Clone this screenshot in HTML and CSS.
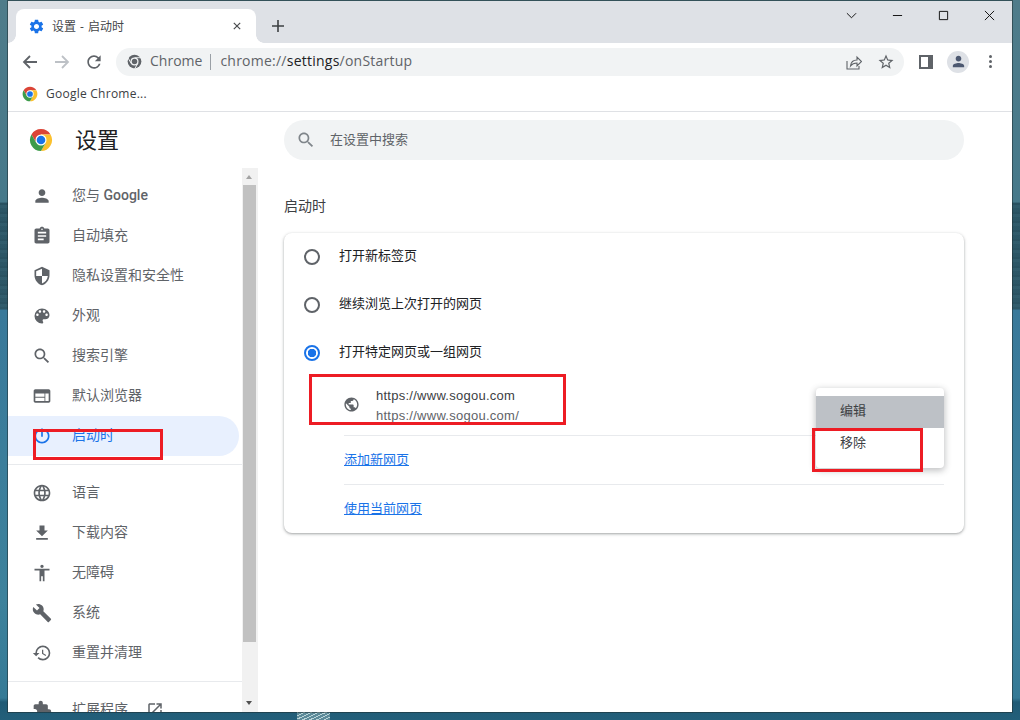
FILE: index.html
```html
<!DOCTYPE html>
<html lang="zh-CN">
<head>
<meta charset="utf-8">
<title>设置 - 启动时</title>
<link rel="stylesheet" href="styles.css">
</head>
<body>
<div class="wall-mark"></div>
<div class="window">
  <header class="tabstrip">
    <div class="tab">
      <svg class="tab-icon" viewBox="0 0 24 24"><path d="M19.14 12.94c.04-.3.06-.61.06-.94 0-.32-.02-.64-.07-.94l2.03-1.58c.18-.14.23-.41.12-.61l-1.92-3.32c-.12-.22-.37-.29-.59-.22l-2.39.96c-.5-.38-1.03-.7-1.62-.94l-.36-2.54c-.04-.24-.24-.41-.48-.41h-3.84c-.24 0-.43.17-.47.41l-.36 2.54c-.59.24-1.13.57-1.62.94l-2.39-.96c-.22-.08-.47 0-.59.22L2.74 8.87c-.12.21-.08.47.12.61l2.03 1.58c-.05.3-.09.63-.09.94s.02.64.07.94l-2.03 1.58c-.18.14-.23.41-.12.61l1.92 3.32c.12.22.37.29.59.22l2.39-.96c.5.38 1.03.7 1.62.94l.36 2.54c.05.24.24.41.48.41h3.84c.24 0 .44-.17.47-.41l.36-2.54c.59-.24 1.13-.56 1.62-.94l2.39.96c.22.08.47 0 .59-.22l1.92-3.32c.12-.22.07-.47-.12-.61l-2.01-1.58zM12 15.6c-1.98 0-3.6-1.62-3.6-3.6s1.62-3.6 3.6-3.6 3.6 1.62 3.6 3.6-1.62 3.6-3.6 3.6z"/></svg>
      <span class="tab-title">设置 - 启动时</span>
      <svg class="tab-close" viewBox="0 0 10 10"><path d="M1 1l8 8M9 1l-8 8"/></svg>
    </div>
    <svg class="new-tab" viewBox="0 0 12 12"><path d="M6 0v12M0 6h12"/></svg>
    <div class="win-controls">
      <div class="win-btn"><svg class="win-icon" viewBox="0 0 12 12"><path d="M1 3.5l5 5 5-5"/></svg></div>
      <div class="win-btn"><svg class="win-icon" viewBox="0 0 12 12"><path d="M1 6h10"/></svg></div>
      <div class="win-btn"><svg class="win-icon" viewBox="0 0 12 12"><path d="M1.5 1.5h9v9h-9z"/></svg></div>
      <div class="win-btn"><svg class="win-icon" viewBox="0 0 12 12"><path d="M1 1l10 10M11 1L1 11"/></svg></div>
    </div>
  </header>

  <div class="toolbar">
    <div class="tool-btn"><svg class="stroke-icon dark" viewBox="0 0 16 16"><path d="M15 8H2M8 2L2 8l6 6"/></svg></div>
    <div class="tool-btn"><svg class="stroke-icon faded" viewBox="0 0 16 16"><path d="M1 8h13M8 2l6 6-6 6"/></svg></div>
    <div class="tool-btn"><svg class="fill-icon dark reload" viewBox="0 0 24 24"><path d="M17.65 6.35A7.958 7.958 0 0 0 12 4c-4.42 0-7.99 3.58-7.99 8s3.57 8 7.99 8c3.73 0 6.84-2.55 7.73-6h-2.08A5.99 5.99 0 0 1 12 18c-3.31 0-6-2.69-6-6s2.69-6 6-6c1.66 0 3.14.69 4.22 1.78L13 11h7V4l-2.35 2.35z"/></svg></div>
    <div class="omnibox">
      <svg class="omni-chrome" viewBox="0 0 24 24">
        <circle cx="12" cy="12" r="11" class="omni-dark"/>
        <circle cx="12" cy="12" r="6.4" class="omni-light"/>
        <circle cx="12" cy="12" r="4.4" class="omni-dark"/>
        <path class="omni-notch" d="M12 5.9H23"/>
        <path class="omni-notch" d="M12 5.9H23" transform="rotate(120 12 12)"/>
        <path class="omni-notch" d="M12 5.9H23" transform="rotate(240 12 12)"/>
      </svg>
      <span class="omni-host">Chrome</span>
      <span class="omni-sep"></span>
      <span class="omni-url">chrome://<b class="omni-strong">settings</b>/onStartup</span>
      <svg class="share-icon" viewBox="0 0 16 16"><path d="M1 7v8h12v-3M4.5 12c.4-3.6 3-6 6.5-6V3l4.5 4.5-4.5 4.500V9c-2.7 0-5 1-6.500 3z"/></svg>
      <svg class="star-icon" viewBox="0 0 24 24"><path d="M22 9.24l-7.19-.62L12 2 9.19 8.63 2 9.24l5.46 4.73L5.82 21 12 17.27 18.18 21l-1.63-7.03L22 9.24zM12 15.4l-3.76 2.27 1-4.28-3.32-2.88 4.38-.38L12 6.1l1.71 4.04 4.38.38-3.32 2.88 1 4.28L12 15.4z"/></svg>
    </div>
    <div class="tool-btn"><span class="side-panel"></span></div>
    <div class="tool-btn">
      <span class="avatar"><svg class="avatar-icon" viewBox="0 0 24 24"><path d="M12 12c2.21 0 4-1.79 4-4s-1.79-4-4-4-4 1.79-4 4 1.79 4 4 4zm0 2c-2.67 0-8 1.34-8 4v2h16v-2c0-2.66-5.33-4-8-4z"/></svg></span>
    </div>
    <div class="tool-btn"><span class="dots"><i></i><i></i><i></i></span></div>
  </div>

  <div class="bookmarks">
    <svg class="logo-small" viewBox="0 0 24 24">
      <path class="c-red" d="M21.53 6.5A11 11 0 0 0 2.47 6.5L7.24 14.75 12 12 12 6.5Z"/>
      <path class="c-yellow" transform="rotate(120 12 12)" d="M21.53 6.5A11 11 0 0 0 2.47 6.5L7.24 14.75 12 12 12 6.5Z"/>
      <path class="c-green" transform="rotate(240 12 12)" d="M21.53 6.5A11 11 0 0 0 2.47 6.5L7.24 14.75 12 12 12 6.5Z"/>
      <circle cx="12" cy="12" r="5.5" class="c-white"/>
      <circle cx="12" cy="12" r="4.3" class="c-blue"/>
    </svg>
    <span class="bookmark-text">Google Chrome...</span>
  </div>

  <div class="page">
    <aside class="sidebar">
      <div class="side-head">
        <svg class="logo-big" viewBox="0 0 24 24">
          <path class="c-red" d="M21.53 6.5A11 11 0 0 0 2.47 6.5L7.24 14.75 12 12 12 6.5Z"/>
          <path class="c-yellow" transform="rotate(120 12 12)" d="M21.53 6.5A11 11 0 0 0 2.47 6.5L7.24 14.75 12 12 12 6.5Z"/>
          <path class="c-green" transform="rotate(240 12 12)" d="M21.53 6.5A11 11 0 0 0 2.47 6.5L7.24 14.75 12 12 12 6.5Z"/>
          <circle cx="12" cy="12" r="5.5" class="c-white"/>
          <circle cx="12" cy="12" r="4.3" class="c-blue"/>
        </svg>
        <h1 class="side-title">设置</h1>
      </div>
      <div class="side-body">
        <nav class="nav">
          <div class="nav-item"><svg class="nav-icon" viewBox="0 0 24 24"><path d="M12 12c2.21 0 4-1.79 4-4s-1.79-4-4-4-4 1.79-4 4 1.79 4 4 4zm0 2c-2.67 0-8 1.34-8 4v2h16v-2c0-2.66-5.33-4-8-4z"/></svg><span>您与 <b class="brand">Google</b></span></div>
          <div class="nav-item"><svg class="nav-icon" viewBox="0 0 24 24"><path d="M19 3h-4.18C14.4 1.84 13.3 1 12 1c-1.3 0-2.4.84-2.82 2H5c-1.1 0-2 .9-2 2v14c0 1.1.9 2 2 2h14c1.1 0 2-.9 2-2V5c0-1.1-.9-2-2-2zm-7 0c.55 0 1 .45 1 1s-.45 1-1 1-1-.45-1-1 .45-1 1-1zm2 14H7v-2h7v2zm3-4H7v-2h10v2zm0-4H7V7h10v2z"/></svg>自动填充</div>
          <div class="nav-item"><svg class="nav-icon" viewBox="0 0 24 24"><path d="M12 1L3 5v6c0 5.55 3.84 10.74 9 12 5.16-1.26 9-6.45 9-12V5l-9-4zm0 10.99h7c-.53 4.12-3.28 7.79-7 8.94V12H5V6.3l7-3.11v8.8z"/></svg>隐私设置和安全性</div>
          <div class="nav-item"><svg class="nav-icon" viewBox="0 0 24 24"><path d="M12 3a9 9 0 0 0 0 18c.83 0 1.5-.67 1.5-1.5 0-.39-.15-.74-.39-1.01-.23-.26-.38-.61-.38-.99 0-.83.67-1.5 1.5-1.5H16c2.76 0 5-2.24 5-5 0-4.42-4.03-8-9-8zm-5.5 9c-.83 0-1.5-.67-1.5-1.5S5.67 9 6.5 9 8 9.67 8 10.5 7.33 12 6.5 12zm3-4C8.67 8 8 7.33 8 6.5S8.67 5 9.5 5s1.5.67 1.5 1.5S10.33 8 9.5 8zm5 0c-.83 0-1.5-.67-1.5-1.5S13.67 5 14.5 5s1.5.67 1.5 1.5S15.33 8 14.5 8zm3 4c-.83 0-1.5-.67-1.5-1.5S16.67 9 17.5 9s1.5.67 1.5 1.5-.67 1.5-1.5 1.5z"/></svg>外观</div>
          <div class="nav-item"><svg class="nav-icon" viewBox="0 0 24 24"><path d="M15.5 14h-.79l-.28-.27C15.41 12.59 16 11.11 16 9.5 16 5.91 13.09 3 9.5 3S3 5.91 3 9.5 5.91 16 9.5 16c1.61 0 3.09-.59 4.23-1.57l.27.28v.79l5 4.99L20.49 19l-4.99-5zm-6 0C7.01 14 5 11.99 5 9.5S7.01 5 9.5 5 14 7.01 14 9.5 11.99 14 9.5 14z"/></svg>搜索引擎</div>
          <div class="nav-item"><svg class="nav-icon" viewBox="0 0 24 24"><path d="M20 4H4c-1.1 0-1.99.9-1.99 2L2 18c0 1.1.9 2 2 2h16c1.1 0 2-.9 2-2V6c0-1.1-.9-2-2-2zm-5 14H4v-4h11v4zm0-5H4V9h11v4zm5 5h-4V9h4v9z"/></svg>默认浏览器</div>
          <div class="nav-item active"><svg class="nav-icon" viewBox="0 0 24 24"><path d="M13 3h-2v10h2V3zm4.83 2.17l-1.42 1.42C17.99 7.86 19 9.81 19 12c0 3.87-3.13 7-7 7s-7-3.13-7-7c0-2.19 1.01-4.14 2.58-5.42L6.17 5.17C4.23 6.82 3 9.26 3 12c0 4.97 4.03 9 9 9s9-4.03 9-9c0-2.74-1.23-5.18-3.17-6.83z"/></svg>启动时</div>
          <div class="nav-divider"></div>
          <div class="nav-item"><svg class="nav-icon" viewBox="0 0 24 24"><path d="M11.99 2C6.47 2 2 6.48 2 12s4.47 10 9.99 10C17.52 22 22 17.52 22 12S17.52 2 11.99 2zm6.93 6h-2.95c-.32-1.25-.78-2.45-1.38-3.56 1.84.63 3.37 1.91 4.33 3.56zM12 4.04c.83 1.2 1.48 2.53 1.91 3.96h-3.82c.43-1.43 1.08-2.76 1.91-3.96zM4.26 14C4.1 13.36 4 12.69 4 12s.1-1.36.26-2h3.38c-.08.66-.14 1.32-.14 2 0 .68.06 1.34.14 2H4.26zm.82 2h2.95c.32 1.25.78 2.45 1.38 3.56-1.84-.63-3.37-1.9-4.33-3.56zm2.95-8H5.08c.96-1.66 2.49-2.93 4.33-3.56C8.81 5.55 8.35 6.75 8.03 8zM12 19.96c-.83-1.2-1.48-2.53-1.91-3.96h3.82c-.43 1.43-1.08 2.76-1.91 3.96zM14.34 14H9.66c-.09-.66-.16-1.32-.16-2 0-.68.07-1.35.16-2h4.68c.09.65.16 1.32.16 2 0 .68-.07 1.34-.16 2zm.25 5.56c.6-1.11 1.06-2.31 1.38-3.56h2.95c-.96 1.65-2.49 2.93-4.33 3.56zM16.36 14c.08-.66.14-1.32.14-2 0-.68-.06-1.34-.14-2h3.38c.16.64.26 1.31.26 2s-.1 1.36-.26 2h-3.38z"/></svg>语言</div>
          <div class="nav-item"><svg class="nav-icon" viewBox="0 0 24 24"><path d="M19 9h-4V3H9v6H5l7 7 7-7zM5 18v2h14v-2H5z"/></svg>下载内容</div>
          <div class="nav-item"><svg class="nav-icon" viewBox="0 0 24 24"><path d="M12 2c1.1 0 2 .9 2 2s-.9 2-2 2-2-.9-2-2 .9-2 2-2zm9 7h-6v13h-2v-6h-2v6H9V9H3V7h18v2z"/></svg>无障碍</div>
          <div class="nav-item"><svg class="nav-icon" viewBox="0 0 24 24"><path d="M22.7 19l-9.1-9.1c.9-2.3.4-5-1.5-6.9-2-2-5-2.4-7.4-1.3L9 6 6 9 1.6 4.7C.4 7.1.9 10.1 2.9 12.1c1.9 1.9 4.6 2.4 6.9 1.5l9.1 9.1c.4.4 1 .4 1.4 0l2.3-2.3c.5-.4.5-1.1.1-1.4z"/></svg>系统</div>
          <div class="nav-item"><svg class="nav-icon" viewBox="0 0 24 24"><path d="M13 3a9 9 0 0 0-9 9H1l3.89 3.89.07.14L9 12H6c0-3.87 3.13-7 7-7s7 3.13 7 7-3.13 7-7 7c-1.93 0-3.68-.79-4.94-2.06l-1.42 1.42A8.954 8.954 0 0 0 13 21a9 9 0 0 0 0-18zm-1 5v5l4.28 2.54.72-1.21-3.5-2.08V8H12z"/></svg>重置并清理</div>
          <div class="nav-divider"></div>
          <div class="nav-item"><svg class="nav-icon" viewBox="0 0 24 24"><path d="M20.5 11H19V7c0-1.1-.9-2-2-2h-4V3.5C13 2.12 11.88 1 10.5 1S8 2.12 8 3.5V5H4c-1.1 0-1.99.9-1.99 2v3.8H3.5c1.49 0 2.7 1.21 2.7 2.7s-1.21 2.7-2.7 2.7H2V20c0 1.1.9 2 2 2h3.8v-1.5c0-1.49 1.21-2.7 2.7-2.7 1.49 0 2.7 1.21 2.7 2.7V22H17c1.1 0 2-.9 2-2v-4h1.5c1.38 0 2.5-1.12 2.5-2.5S21.88 11 20.5 11z"/></svg>扩展程序<svg class="ext-icon" viewBox="0 0 24 24"><path d="M19 19H5V5h7V3H5c-1.11 0-2 .9-2 2v14c0 1.1.89 2 2 2h14c1.1 0 2-.9 2-2v-7h-2v7zM14 3v2h3.59l-9.83 9.83 1.41 1.41L19 6.41V10h2V3h-7z"/></svg></div>
        </nav>
        <div class="scrollbar">
          <span class="arrow-up"></span>
          <div class="thumb"></div>
          <span class="arrow-down"></span>
        </div>
      </div>
    </aside>

    <main class="main">
      <div class="search">
        <svg class="search-icon" viewBox="0 0 24 24"><path d="M15.5 14h-.79l-.28-.27C15.41 12.59 16 11.11 16 9.5 16 5.91 13.09 3 9.5 3S3 5.91 3 9.5 5.91 16 9.5 16c1.61 0 3.09-.59 4.23-1.57l.27.28v.79l5 4.99L20.49 19l-4.99-5zm-6 0C7.01 14 5 11.99 5 9.5S7.01 5 9.5 5 14 7.01 14 9.5 11.99 14 9.5 14z"/></svg>
        <span class="search-text">在设置中搜索</span>
      </div>
      <h2 class="section-title">启动时</h2>
      <section class="card">
        <div class="radio-row"><span class="radio"></span><span class="radio-label">打开新标签页</span></div>
        <div class="radio-row"><span class="radio"></span><span class="radio-label">继续浏览上次打开的网页</span></div>
        <div class="radio-row"><span class="radio checked"></span><span class="radio-label">打开特定网页或一组网页</span></div>
        <div class="site-row">
          <svg class="globe" viewBox="0 0 24 24"><path d="M12 2C6.48 2 2 6.48 2 12s4.48 10 10 10 10-4.48 10-10S17.52 2 12 2zm-1 17.93c-3.95-.49-7-3.85-7-7.93 0-.62.08-1.21.21-1.79L9 15v1c0 1.1.9 2 2 2v1.93zm6.9-2.54c-.26-.81-1-1.39-1.9-1.39h-1v-3c0-.55-.45-1-1-1H8v-2h2c.55 0 1-.45 1-1V7h2c1.1 0 2-.9 2-2v-.41c2.93 1.19 5 4.06 5 7.41 0 2.08-.8 3.97-2.1 5.39z"/></svg>
          <div class="site-text">
            <div class="site-name">https://www.sogou.com</div>
            <div class="site-url">https://www.sogou.com/</div>
          </div>
        </div>
        <div class="link-row"><a class="link">添加新网页</a></div>
        <div class="link-row last"><a class="link">使用当前网页</a></div>
        <div class="menu">
          <div class="menu-item hovered">编辑</div>
          <div class="menu-item">移除</div>
        </div>
      </section>
    </main>
  </div>

  <div class="mark mark-site"></div>
  <div class="mark mark-remove"></div>
  <div class="mark mark-startup"></div>
</div>
</body>
</html>
```

FILE: styles.css
```css
* { box-sizing: border-box; }
html, body { margin: 0; height: 100%; overflow: hidden; }
body {
  position: relative;
  width: 1020px;
  height: 720px;
  padding: 1px 8px 0;
  background:
    repeating-linear-gradient(180deg, rgba(15, 40, 50, .14) 0 2px, rgba(120, 160, 170, .04) 2px 5px, rgba(15, 40, 50, .06) 5px 9px) 0 203px / 100% 107px no-repeat,
    linear-gradient(180deg, #4f7c8a 0, #46798a 202px, #2d5868 203px, #2f5a6a 309px, #39799a 310px, #3d829c 600px, #357a96 698px, #1f5a75 702px, #235f7a 720px);
  font-family: Roboto, "Noto Sans CJK SC", sans-serif;
}
.wall-mark {
  position: absolute;
  left: 297px;
  top: 712px;
  width: 33px;
  height: 8px;
  background: repeating-linear-gradient(155deg, #b9d4d8 0 1px, #5c8a99 1px 3px);
}
.window {
  position: relative;
  width: 1004px;
  height: 711px;
  background: #fff;
  overflow: hidden;
  display: flex;
  flex-direction: column;
  box-shadow: 0 0 0 1px rgba(30, 45, 50, .55);
}

/* tab strip */
.tabstrip {
  height: 42px;
  flex: none;
  display: flex;
  align-items: flex-start;
  padding-left: 8px;
  background: #dee1e6;
}
.tab {
  position: relative;
  width: 240px;
  height: 34px;
  margin-top: 8px;
  padding: 0 12px;
  display: flex;
  align-items: center;
  background: #fff;
  border-radius: 8px 8px 0 0;
}
.tab::before, .tab::after {
  content: "";
  position: absolute;
  bottom: 0;
  width: 8px;
  height: 8px;
}
.tab::before { left: -8px; background: radial-gradient(circle at 0 0, transparent 7.5px, #fff 8px); }
.tab::after { right: -8px; background: radial-gradient(circle at 100% 0, transparent 7.5px, #fff 8px); }
.tab-icon { width: 17px; height: 17px; fill: #1a73e8; flex: none; }
.tab-title { margin-left: 7px; font: 12px "Open Sans", "Noto Sans CJK SC", sans-serif; word-spacing: 1px; color: #45474a; }
.tab-close { width: 8px; height: 8px; margin-left: auto; margin-right: 3px; fill: none; stroke: #4a4c4f; stroke-width: 1.5; }
.new-tab { width: 12px; height: 12px; margin: 19px 0 0 16px; fill: none; stroke: #3c4043; stroke-width: 1.6; }
.win-controls { margin-left: auto; display: flex; }
.win-btn { width: 46px; height: 28px; display: flex; align-items: center; justify-content: center; }
.win-icon { width: 11px; height: 11px; fill: none; stroke: #111; stroke-width: 1.05; }

/* toolbar */
.toolbar {
  height: 37px;
  flex: none;
  display: flex;
  align-items: center;
  padding: 0 6px;
  background: #fff;
}
.tool-btn { width: 32px; height: 28px; flex: none; display: flex; align-items: center; justify-content: center; }
.stroke-icon { width: 16px; height: 16px; fill: none; stroke-width: 1.8; }
.stroke-icon.dark { stroke: #5f6368; }
.stroke-icon.faded { stroke: #bdc1c6; }
.fill-icon.dark { fill: #5f6368; }
.reload { width: 20px; height: 20px; }
.omnibox {
  flex: 1;
  height: 28px;
  margin: 0 6px;
  padding: 0 9px 0 11px;
  display: flex;
  align-items: center;
  background: #f1f3f4;
  border-radius: 14px;
  font: 14px "Open Sans", sans-serif;
  color: #5f6368;
}
.omni-chrome { width: 15px; height: 15px; flex: none; }
.omni-dark { fill: #5f6368; }
.omni-light { fill: #f1f3f4; }
.omni-notch { fill: none; stroke: #f1f3f4; stroke-width: 1.4; }
.omni-host { margin: 0 0 2px 8px; }
.omni-sep { width: 1px; height: 16px; margin: 0 9px 0 8px; background: #9aa0a6; }
.omni-url { margin-bottom: 2px; letter-spacing: .24px; }
.omni-strong { font-weight: 400; color: #202124; }
.share-icon { width: 16px; height: 16px; margin-left: auto; fill: none; stroke: #5f6368; stroke-width: 1.1; }
.star-icon { width: 18px; height: 18px; margin-left: 15px; fill: #5f6368; }
.side-panel { width: 14px; height: 14px; border: 2px solid #5f6368; border-right-width: 5px; }
.avatar { width: 22px; height: 22px; border-radius: 50%; background: #dee1e6; display: flex; align-items: center; justify-content: center; }
.avatar-icon { width: 17px; height: 17px; fill: #4c5870; }
.dots { display: flex; flex-direction: column; gap: 2px; }
.dots i { width: 3px; height: 3px; border-radius: 50%; background: #5f6368; }

/* bookmarks */
.bookmarks {
  height: 32px;
  flex: none;
  display: flex;
  align-items: center;
  padding: 0 0 4px 14px;
  border-bottom: 1px solid #dfe1e5;
}
.logo-small { width: 16px; height: 16px; flex: none; }
.bookmark-text { margin-left: 8px; font: 12px "Open Sans", sans-serif; letter-spacing: .25px; color: #3c4043; }
.c-red { fill: #db4437; }
.c-yellow { fill: #fbc02d; }
.c-green { fill: #3d9b4a; }
.c-white { fill: #fff; }
.c-blue { fill: #1a73e8; }

/* page */
.page { flex: 1; min-height: 0; display: flex; }
.sidebar { width: 250px; flex: none; display: flex; flex-direction: column; min-height: 0; }
.side-head { height: 56px; flex: none; display: flex; align-items: center; padding: 0 0 0 21px; }
.logo-big { width: 24px; height: 24px; flex: none; }
.side-title { margin: 0 0 4px 22px; font-size: 22px; font-weight: 400; color: #202124; }
.side-body { flex: 1; min-height: 0; display: flex; }
.nav { width: 234px; flex: none; padding-top: 8px; overflow: hidden; }
.nav-item {
  width: 231px;
  height: 40px;
  flex: none;
  display: flex;
  align-items: center;
  padding: 0 0 4px 24px;
  border-radius: 0 20px 20px 0;
  font-size: 14px;
  color: #5f6368;
}
.nav-item.active { background: #e8f0fe; color: #1a73e8; }
.nav-icon { width: 20px; height: 20px; margin: 4px 20px 0 0; flex: none; fill: #5f6368; }
.active .nav-icon { fill: #1a73e8; }
.brand { font-weight: 500; }
.ext-icon { width: 18px; height: 18px; margin: 4px 0 0 18px; fill: #5f6368; }
.nav-divider { height: 1px; margin: 8px 0; background: #e8eaed; }
.scrollbar { position: relative; width: 16px; flex: none; background: #f1f1f1; display: flex; flex-direction: column; align-items: center; padding-top: 17px; }
.thumb { width: 13px; height: 457px; margin-left: -1px; background: #c1c1c1; }
.arrow-up, .arrow-down { position: absolute; left: 4px; width: 0; height: 0; border-left: 3.5px solid transparent; border-right: 3.5px solid transparent; }
.arrow-up { top: 7px; border-bottom: 4px solid #a3a3a3; }
.arrow-down { bottom: 7px; border-top: 4px solid #505050; }

/* main */
.main { flex: 1; min-width: 0; padding: 8px 0 0 26px; }
.search {
  width: 680px;
  height: 40px;
  display: flex;
  align-items: center;
  padding-left: 12px;
  background: #f1f3f4;
  border-radius: 20px;
}
.search-icon { width: 20px; height: 20px; fill: #80868b; flex: none; }
.search-text { margin: 0 0 4px 14px; font-size: 13px; color: #5f6368; }
.section-title { margin: 36px 0 17px; height: 20px; line-height: 20px; font-size: 14px; font-weight: 400; color: #3c4043; }
.card {
  position: relative;
  width: 680px;
  height: 300px;
  background: #fff;
  border-radius: 8px;
  box-shadow: 0 1px 2px rgba(60, 64, 67, .3), 0 1px 3px 1px rgba(60, 64, 67, .15);
  font-size: 13px;
  color: #202124;
}
.radio-row { height: 48px; display: flex; align-items: center; padding-left: 20px; }
.radio { width: 16px; height: 16px; margin-right: 19px; border: 2px solid #5f6368; border-radius: 50%; flex: none; }
.radio.checked { border-color: #1a73e8; background: radial-gradient(circle, #1a73e8 0 4px, #fff 4.5px); }
.radio-label { margin-bottom: 6px; }
.site-row { height: 59px; margin: 0 20px 0 60px; display: flex; align-items: center; padding-bottom: 3px; border-bottom: 1px solid #e8eaed; }
.globe { width: 17px; height: 17px; margin-left: -1px; flex: none; fill: #5f6368; }
.site-text { margin: 2px 0 0 16px; line-height: 20px; font-family: "Liberation Sans", sans-serif; letter-spacing: .26px; color: #5f6368; }
.site-name { color: #3c4043; }
.link-row { height: 49px; margin: 0 20px 0 60px; display: flex; align-items: center; padding-bottom: 4px; border-bottom: 1px solid #e8eaed; }
.link-row.last { border-bottom: 0; height: 48px; }
.link { color: #1a73e8; text-decoration: underline; }
.menu {
  position: absolute;
  top: 155px;
  right: 20px;
  width: 128px;
  padding: 8px 0;
  background: #fff;
  border-radius: 4px;
  box-shadow: 0 2px 6px 1px rgba(60, 64, 67, .3);
}
.menu-item { height: 32px; line-height: 30px; padding-left: 24px; color: #3c4043; }
.menu-item.hovered { background: #bdc1c6; }

/* red annotation rectangles */
.mark { position: absolute; border: 3px solid #ed1c24; }
.mark-site { left: 301px; top: 373px; width: 257px; height: 51px; }
.mark-remove { left: 804px; top: 427px; width: 111px; height: 44px; }
.mark-startup { left: 25px; top: 428px; width: 130px; height: 31px; }
```
